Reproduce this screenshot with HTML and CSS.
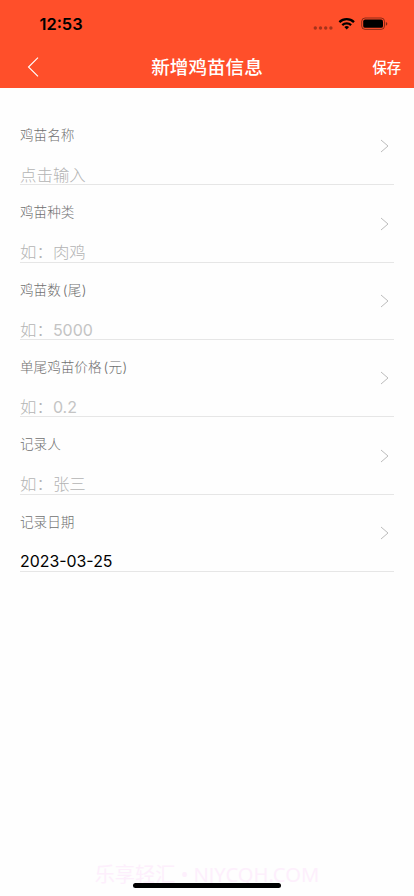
FILE: index.html
```html
<!DOCTYPE html>
<html lang="zh-CN">
<head>
<meta charset="utf-8">
<meta name="viewport" content="width=device-width, initial-scale=1">
<title>新增鸡苗信息</title>
<link rel="stylesheet" href="styles.css">
</head>
<body>
<header class="header">
  <div class="status">
    <span class="time">12:53</span>
    <svg class="signals" width="76" height="16" viewBox="0 0 76 16">
      <g fill="#000" opacity=".35"><circle cx="3.3" cy="12" r="1.7"/><circle cx="8.5" cy="12" r="1.7"/><circle cx="13.7" cy="12" r="1.7"/><circle cx="18.9" cy="12" r="1.7"/></g>
      <g fill="none" stroke="#000" stroke-width="2.3"><path d="M27.4 6.1a10.4 10.4 0 0 1 14.6 0"/><path d="M30.3 9.2a6.4 6.4 0 0 1 8.8 0"/></g>
      <path d="M34.7 13.6l-2.4-2.5a3.5 3.5 0 0 1 4.8 0z"/>
      <rect x="49.7" y="2" width="22.8" height="11.4" rx="3.4" fill="none" stroke="#000" stroke-opacity=".45"/>
      <rect x="51.2" y="3.6" width="19.8" height="8.2" rx="1.9"/>
      <path d="M73.9 5.9v3.8q1.4-.6 1.4-1.9t-1.4-1.9z" fill-opacity=".5"/>
    </svg>
  </div>
  <nav class="nav">
    <svg class="back" width="12" height="20" viewBox="0 0 12 20"><path d="M11 .7L1.5 10l9.5 9.3" fill="none" stroke="#fff" stroke-width="1.1"/></svg>
    <h1 class="title">新增鸡苗信息</h1>
    <span class="save">保存</span>
  </nav>
</header>
<main class="form">
  <div class="row"><div class="field"><span class="label">鸡苗名称</span><span class="value">点击输入</span></div><svg class="chev" viewBox="0 0 9 14"><path d="M1 1l7 6-7 6"/></svg></div>
  <div class="row"><div class="field"><span class="label">鸡苗种类</span><span class="value">如：肉鸡</span></div><svg class="chev" viewBox="0 0 9 14"><path d="M1 1l7 6-7 6"/></svg></div>
  <div class="row"><div class="field"><span class="label">鸡苗数<span class="unit">(尾)</span></span><span class="value">如：<span class="num">5000</span></span></div><svg class="chev" viewBox="0 0 9 14"><path d="M1 1l7 6-7 6"/></svg></div>
  <div class="row"><div class="field"><span class="label">单尾鸡苗价格<span class="unit">(元)</span></span><span class="value">如：<span class="num">0.2</span></span></div><svg class="chev" viewBox="0 0 9 14"><path d="M1 1l7 6-7 6"/></svg></div>
  <div class="row"><div class="field"><span class="label">记录人</span><span class="value">如：张三</span></div><svg class="chev" viewBox="0 0 9 14"><path d="M1 1l7 6-7 6"/></svg></div>
  <div class="row"><div class="field"><span class="label">记录日期</span><span class="value filled">2023-03-25</span></div><svg class="chev" viewBox="0 0 9 14"><path d="M1 1l7 6-7 6"/></svg></div>
</main>
<footer class="footer">
  <span class="mark">乐享轻汇 • NJYCQH.COM</span>
  <span class="home"></span>
</footer>
</body>
</html>
```
FILE: styles.css
```css
* { box-sizing: border-box; }
body {
  margin: 0;
  height: 896px;
  overflow: hidden;
  display: flex;
  flex-direction: column;
  background: #fefefe;
  font-family: Inter, "Noto Sans CJK SC", sans-serif;
}
.header {
  height: 88.4px;
  flex: none;
  background: #ff4f2a;
}
.status {
  height: 45px;
  padding: 3px 26.5px 0 39.5px;
  display: flex;
  align-items: center;
  justify-content: space-between;
}
.time { font-size: 16.4px; font-weight: 600; color: #000; }
.signals { display: block; }
.nav {
  height: 43px;
  padding: 0 13px 0 27px;
  display: grid;
  grid-template-columns: 33px 1fr 47px;
  align-items: center;
  color: #fff;
}
.title {
  margin: 0;
  font-size: 18.6px;
  line-height: 28px;
  font-weight: 500;
  text-align: center;
  white-space: nowrap;
}
.save { font-size: 14.3px; font-weight: 500; text-align: right; }
.form { padding: 19.7px 20px 0; }
.row {
  height: 77.35px;
  display: flex;
  align-items: center;
  justify-content: space-between;
  padding-right: 5px;
  border-bottom: 1px solid #e6e6e6;
}
.field {
  height: 100%;
  padding-top: 17px;
  display: flex;
  flex-direction: column;
}
.label {
  font-size: 13.6px;
  line-height: 20px;
  font-weight: 300;
  color: #707070;
}
.unit { margin-left: 2px; letter-spacing: .3px; }
.value {
  margin-top: 18px;
  font-size: 16.45px;
  line-height: 24px;
  font-weight: 300;
  color: #b4b4b4;
}
.num { font-size: 16px; font-weight: 400; color: #c4c4c4; }
.filled { font-weight: 400; color: #000; font-size: 15.9px; }
.chev { width: 9px; height: 14px; fill: none; stroke: #bcbcbc; stroke-width: 1; }
.footer {
  margin-top: auto;
  height: 36px;
  position: relative;
  display: flex;
  justify-content: center;
}
.mark {
  font-family: "Noto Sans", "Noto Sans CJK SC", sans-serif;
  font-size: 20.2px;
  line-height: 29px;
  color: #fdeffc;
  white-space: nowrap;
}
.home {
  position: absolute;
  left: 133px;
  bottom: 8px;
  width: 148px;
  height: 5px;
  border-radius: 3px;
  background: #000;
}
```
